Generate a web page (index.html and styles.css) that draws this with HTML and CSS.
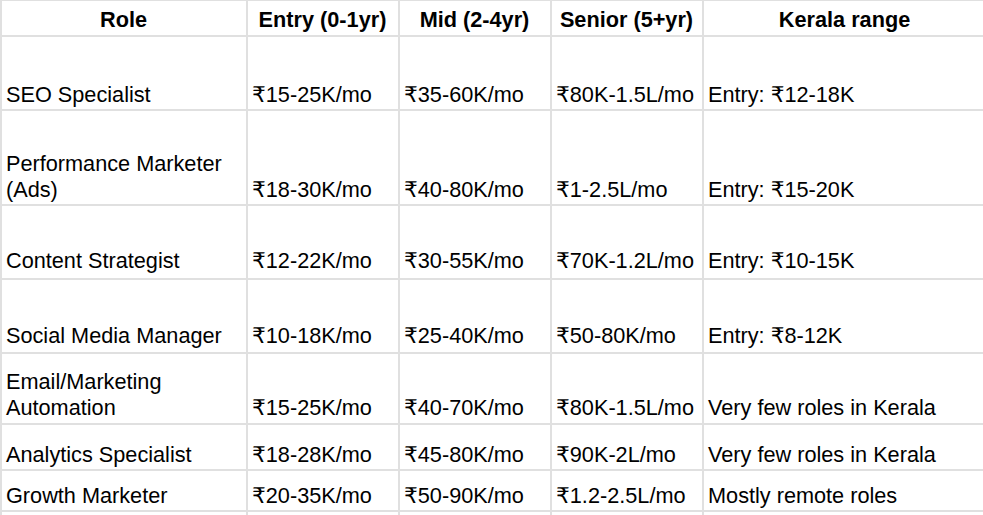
FILE: index.html
```html
<!DOCTYPE html>
<html lang="en">
<head>
<meta charset="utf-8">
<title>Digital marketing salaries</title>
<link rel="stylesheet" href="styles.css">
</head>
<body>
<table class="sheet">
  <colgroup>
    <col class="c-role">
    <col class="c-num">
    <col class="c-num">
    <col class="c-num">
    <col class="c-kerala">
  </colgroup>
  <thead>
    <tr class="h-head">
      <th>Role</th>
      <th>Entry (0-1yr)</th>
      <th>Mid (2-4yr)</th>
      <th>Senior (5+yr)</th>
      <th>Kerala range</th>
    </tr>
  </thead>
  <tbody>
    <tr class="h-74">
      <td>SEO Specialist</td>
      <td>₹15-25K/mo</td>
      <td>₹35-60K/mo</td>
      <td>₹80K-1.5L/mo</td>
      <td>Entry: ₹12-18K</td>
    </tr>
    <tr class="h-95">
      <td>Performance Marketer (Ads)</td>
      <td>₹18-30K/mo</td>
      <td>₹40-80K/mo</td>
      <td>₹1-2.5L/mo</td>
      <td>Entry: ₹15-20K</td>
    </tr>
    <tr class="h-74 lift-3">
      <td>Content Strategist</td>
      <td>₹12-22K/mo</td>
      <td>₹30-55K/mo</td>
      <td>₹70K-1.2L/mo</td>
      <td>Entry: ₹10-15K</td>
    </tr>
    <tr class="h-74 lift-2">
      <td>Social Media Manager</td>
      <td>₹10-18K/mo</td>
      <td>₹25-40K/mo</td>
      <td>₹50-80K/mo</td>
      <td>Entry: ₹8-12K</td>
    </tr>
    <tr class="h-71 lift-1">
      <td>Email/Marketing Automation</td>
      <td>₹15-25K/mo</td>
      <td>₹40-70K/mo</td>
      <td>₹80K-1.5L/mo</td>
      <td>Very few roles in Kerala</td>
    </tr>
    <tr class="h-46">
      <td>Analytics Specialist</td>
      <td>₹18-28K/mo</td>
      <td>₹45-80K/mo</td>
      <td>₹90K-2L/mo</td>
      <td>Very few roles in Kerala</td>
    </tr>
    <tr class="h-41">
      <td>Growth Marketer</td>
      <td>₹20-35K/mo</td>
      <td>₹50-90K/mo</td>
      <td>₹1.2-2.5L/mo</td>
      <td>Mostly remote roles</td>
    </tr>
    <tr class="h-41">
      <td></td><td></td><td></td><td></td><td></td>
    </tr>
  </tbody>
</table>
</body>
</html>
```
FILE: styles.css
```css
html, body {
  margin: 0;
  padding: 0;
  background: #ffffff;
  overflow: hidden;
}

body {
  font-family: "Liberation Sans", Arial, "DejaVu Sans", sans-serif;
  font-size: 21.7px;
  line-height: 26px;
  color: #000000;
}

.sheet {
  border-collapse: separate;
  border-spacing: 0;
  table-layout: fixed;
  width: 986px;
  border-top: 1px solid #e0e0e0;
  border-left: 2px solid #e0e0e0;
}

.c-role { width: 246px; }
.c-num { width: 152px; }
.c-kerala { width: 284px; }

.sheet th,
.sheet td {
  box-sizing: border-box;
  border-right: 2px solid #e0e0e0;
  border-bottom: 2px solid #e0e0e0;
  padding: 0 5px 1px 4px;
  vertical-align: bottom;
  text-align: left;
  overflow: hidden;
}

.sheet th {
  font-weight: bold;
  text-align: center;
  padding-bottom: 2px;
}

.h-head th { height: 36px; }
.h-74 td { height: 74px; }
.h-95 td { height: 95px; }
.h-71 td { height: 71px; }
.h-46 td { height: 46px; }
.h-41 td { height: 41px; }

.lift-1 td { padding-bottom: 2px; }
.lift-2 td { padding-bottom: 3px; }
.lift-3 td { padding-bottom: 4px; }
```
